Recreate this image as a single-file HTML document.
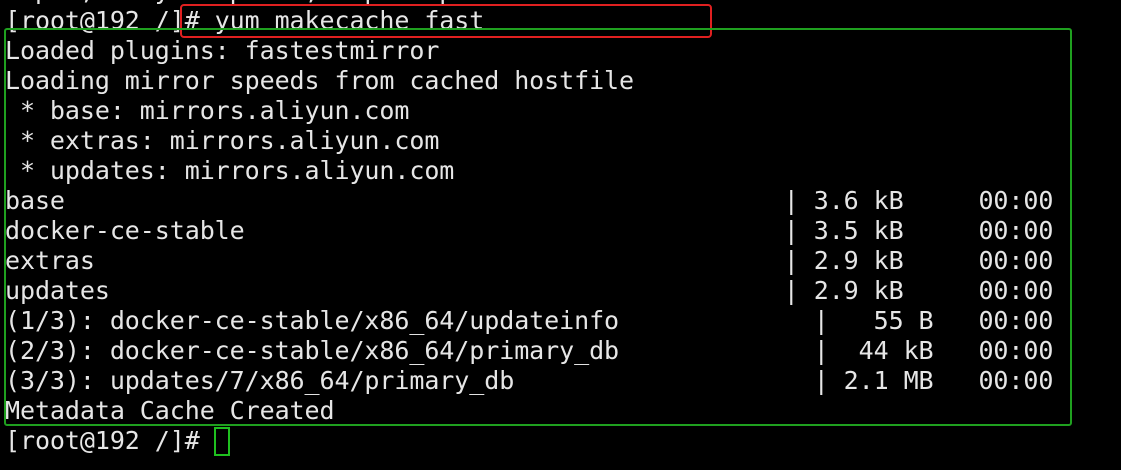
<!DOCTYPE html>
<html><head><meta charset="utf-8"><style>
html,body{margin:0;padding:0;background:#000;width:1121px;height:470px;overflow:hidden}
pre{position:absolute;left:5px;top:-24px;margin:0;font-family:"DejaVu Sans Mono","Liberation Mono",monospace;font-size:25px;letter-spacing:-0.075px;line-height:30px;color:#e6e6e6;white-space:pre}
.r{position:absolute;left:180px;top:4px;width:528px;height:30px;border:2px solid #e02020;border-radius:4px}
.g{position:absolute;left:4px;top:28px;width:1064px;height:394px;border:2px solid #1fa01f;border-radius:3px}
.c{position:absolute;left:214px;top:427px;width:12px;height:25px;border:2px solid #1fc01f}
</style></head><body>
<pre>  p  ,    y    p    ,   p    p  
[root@192 /]# yum makecache fast
Loaded plugins: fastestmirror
Loading mirror speeds from cached hostfile
 * base: mirrors.aliyun.com
 * extras: mirrors.aliyun.com
 * updates: mirrors.aliyun.com
base                                                | 3.6 kB     00:00
docker-ce-stable                                    | 3.5 kB     00:00
extras                                              | 2.9 kB     00:00
updates                                             | 2.9 kB     00:00
(1/3): docker-ce-stable/x86_64/updateinfo             |   55 B   00:00
(2/3): docker-ce-stable/x86_64/primary_db             |  44 kB   00:00
(3/3): updates/7/x86_64/primary_db                    | 2.1 MB   00:00
Metadata Cache Created
[root@192 /]# </pre>
<div class="r"></div><div class="g"></div><div class="c"></div>
</body></html>
